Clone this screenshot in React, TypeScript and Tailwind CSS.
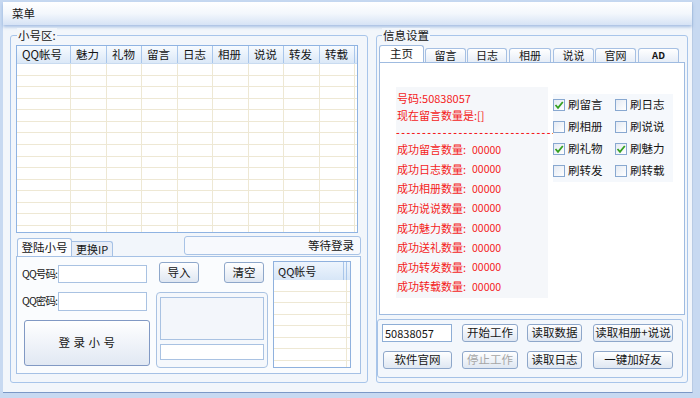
import React from "react";

const cols = [
  { l: "QQ帐号", w: "w-[54px]" },
  { l: "魅力", w: "w-[36px]" },
  { l: "礼物", w: "w-[35px]" },
  { l: "留言", w: "w-[36px]" },
  { l: "日志", w: "w-[35px]" },
  { l: "相册", w: "w-[36px]" },
  { l: "说说", w: "w-[35px]" },
  { l: "转发", w: "w-[36px]" },
  { l: "转载", w: "w-[35px]" },
];

const rowHeights = ["h-[12px]", "h-[11px]", "h-[12px]", "h-[11px]", "h-[12px]", "h-[11px]", "h-[12px]", "h-[12px]", "h-[11px]", "h-[12px]", "h-[11px]", "h-[12px]", "h-[11px]", "h-[12px]", "h-[12px]"];

function Btn({ children, className = "", disabled = false }: { children: React.ReactNode; className?: string; disabled?: boolean }) {
  return (
    <div
      className={`flex shrink-0 items-center justify-center rounded-[3px] border border-[#8ea7ca] bg-linear-to-b from-white to-[#dfe7f2] text-[11.5px] leading-none whitespace-nowrap ${disabled ? "text-[#a6a6a6]" : "text-[#151515]"} ${className}`}
    >
      {children}
    </div>
  );
}

function Check({ label, checked }: { label: string; checked?: boolean }) {
  return (
    <div className="flex items-center">
      <div className="w-[12px] h-[12px] border border-[#88a8d0] bg-linear-to-br from-[#e4eaf3] to-white flex items-center justify-center">
        {checked && (
          <svg width="10" height="10" viewBox="0 0 10 10">
            <polyline points="1.5,5 4,7.8 8.8,2" fill="none" stroke="#35a020" strokeWidth="1.8" />
          </svg>
        )}
      </div>
      <span className="ml-[3px] text-[11.5px] leading-none text-[#151515]">{label}</span>
    </div>
  );
}

const stats = ["成功留言数量", "成功日志数量", "成功相册数量", "成功说说数量", "成功魅力数量", "成功送礼数量", "成功转发数量", "成功转载数量"];

export default function App() {
  return (
    <div className="w-[700px] h-[398px] bg-[#c7d9f1] overflow-hidden font-['Noto_Sans_CJK_SC','Noto_Sans',sans-serif] text-[11px] text-[#151515]">
      <div className="ml-[3px] mt-[2px] w-[690px] h-[391px] bg-[#f2f6fb] border-r border-r-[#b8cbe4] border-b border-b-[#7b98c6] flex flex-col">
        {/* menu bar */}
        <div className="h-[23px] shrink-0 bg-linear-to-b from-white via-[#f3f7fc] to-[#d6e3f5] shadow-[0_2px_3px_rgba(130,165,215,0.7)] flex items-center pl-[9px] text-[11.5px] leading-none">
          菜单
        </div>

        <div className="flex mt-[10px]">
          {/* left group */}
          <div className="relative ml-[7px] w-[358px] h-[348px] border border-[#a8c5ea] rounded-[3px] pl-[5px] pt-[9px]">
            <div className="absolute -top-[8px] left-[6px] px-[1px] bg-[#f2f6fb] leading-[14px] text-[11.5px]">小号区:</div>

            {/* table */}
            <div className="w-[342px] h-[188px] border border-[#8fb3e2] bg-white flex flex-col overflow-hidden">
              <div className="h-[18px] shrink-0 flex bg-linear-to-b from-[#f7fbff] to-[#dbe8f7] border-b border-[#c9dbf0]">
                {cols.map((c) => (
                  <div key={c.l} className={`${c.w} shrink-0 h-full border-r border-[#a9c6ea] flex items-center pl-[5px] leading-none text-[11.5px]`}>
                    {c.l}
                  </div>
                ))}
                <div className="flex-1" />
              </div>
              <div className="flex-1 overflow-hidden">
                {rowHeights.map((h, i) => (
                  <div key={i} className={`${h} flex border-b border-[#eee8d4]`}>
                    {cols.map((c) => (
                      <div key={c.l} className={`${c.w} shrink-0 h-full border-r border-[#eee8d4]`} />
                    ))}
                  </div>
                ))}
              </div>
            </div>

            {/* tabs row */}
            <div className="mt-[3px] w-[345px] h-[20px] flex">
              <div className="self-end ml-[1px] w-[55px] h-[18px] border border-b-0 border-[#a5c1e5] rounded-t-[3px] bg-[#fbfcfe] flex items-center justify-center leading-none text-[11.5px]">
                登陆小号
              </div>
              <div className="self-end w-[41px] h-[15px] border border-b-0 border-l-0 border-[#a5c1e5] rounded-tr-[3px] bg-[#e8eef7] flex items-center justify-center leading-none text-[11px]">
                更换IP
              </div>
              <div className="ml-auto w-[177px] h-[19px] rounded-[3px] border border-[#a8c3e6] bg-[#f7f9fd] flex items-center justify-end pr-[6px] leading-none text-[11.5px]">
                等待登录
              </div>
            </div>

            {/* tab panel */}
            <div className="w-[345px] h-[118px] border border-[#a5c1e5] bg-[#fafcfe] flex pt-[4px]">
              {/* col A */}
              <div className="ml-[5px] w-[129px] flex flex-col">
                <div className="mt-[4px] flex items-center h-[18px]">
                  <span className="w-[36px] text-[10.5px] tracking-[-0.9px] leading-none whitespace-nowrap">QQ号码:</span>
                  <div className="w-[89px] h-[18px] border border-[#a9c2e2] bg-white" />
                </div>
                <div className="mt-[9px] flex items-center h-[19px]">
                  <span className="w-[36px] text-[10.5px] tracking-[-0.9px] leading-none whitespace-nowrap">QQ密码:</span>
                  <div className="w-[89px] h-[19px] border border-[#a9c2e2] bg-white" />
                </div>
                <div className="mt-[9px] ml-[2px] w-[126px] h-[46px] rounded-[3px] border border-[#8199c4] bg-linear-to-b from-white to-[#e1e8f3] flex items-center justify-center text-[11.5px] tracking-[0.5px] leading-none">
                  登 录 小 号
                </div>
              </div>

              {/* col B */}
              <div className="ml-[5px] w-[112px] flex flex-col">
                <div className="mt-[1px] flex">
                  <Btn className="ml-[3px] w-[40px] h-[21px]">导入</Btn>
                  <Btn className="ml-[25px] w-[40px] h-[21px]">清空</Btn>
                </div>
                <div className="mt-[9px] w-[112px] h-[76px] rounded-[4px] border border-[#a9c2e2] bg-[#f5f8fc] flex flex-col">
                  <div className="mt-[4px] ml-[3px] w-[104px] h-[43px] border border-[#a9c2e2] bg-[#f3f6fb]" />
                  <div className="mt-[4px] ml-[3px] w-[104px] h-[16px] border border-[#a9c2e2] bg-white" />
                </div>
              </div>

              {/* col C */}
              <div className="ml-[5px] w-[78px] h-[107px] border border-[#8fb1de] bg-white flex flex-col overflow-hidden">
                <div className="h-[18px] shrink-0 flex bg-linear-to-b from-[#eef5fd] to-[#d7e6f7]">
                  <div className="w-[70px] h-full border-r border-[#a9c6ea] flex items-center pl-[4px] text-[11px] leading-none">QQ帐号</div>
                  <div className="w-[3px] h-full border-r border-[#a9c6ea]" />
                </div>
                {rowHeights.slice(0, 8).map((h, i) => (
                  <div key={i} className={`${h} shrink-0 flex border-b border-[#eee8d4]`}>
                    <div className="w-[73px] h-full border-r border-[#eee8d4]" />
                  </div>
                ))}
              </div>
            </div>
          </div>

          {/* right group */}
          <div className="relative ml-[8px] w-[312px] h-[348px] border border-[#a8c5ea] rounded-[3px] pt-[9px]">
            <div className="absolute -top-[8px] left-[5px] px-[1px] bg-[#f2f6fb] leading-[14px] text-[11.5px]">信息设置</div>

            <div className="ml-[2px]">
              <div className="h-[17px] flex items-end">
                <div className="w-[45px] h-[17px] bg-white border border-b-0 border-[#9fbbe0] rounded-t-[3px] flex items-center justify-center leading-none text-[11.5px]">主页</div>
                <div className="ml-[1px] w-[41px] h-[14px] bg-linear-to-b from-white to-[#e6edf7] border border-b-0 border-[#a6c0e3] rounded-t-[3px] flex items-center justify-center leading-none text-[11px]">留言</div>
                <div className="ml-[1px] w-[40px] h-[14px] bg-linear-to-b from-white to-[#e6edf7] border border-b-0 border-[#a6c0e3] rounded-t-[3px] flex items-center justify-center leading-none text-[11px]">日志</div>
                <div className="ml-[2px] w-[42px] h-[14px] bg-linear-to-b from-white to-[#e6edf7] border border-b-0 border-[#a6c0e3] rounded-t-[3px] flex items-center justify-center leading-none text-[11px]">相册</div>
                <div className="ml-[2px] w-[41px] h-[14px] bg-linear-to-b from-white to-[#e6edf7] border border-b-0 border-[#a6c0e3] rounded-t-[3px] flex items-center justify-center leading-none text-[11px]">说说</div>
                <div className="ml-[1px] w-[41px] h-[14px] bg-linear-to-b from-white to-[#e6edf7] border border-b-0 border-[#a6c0e3] rounded-t-[3px] flex items-center justify-center leading-none text-[11px]">官网</div>
                <div className="ml-[2px] w-[41px] h-[14px] bg-linear-to-b from-white to-[#e6edf7] border border-b-0 border-[#a6c0e3] rounded-t-[3px] flex items-center justify-center leading-none text-[9.5px] font-semibold">AD</div>
              </div>

              <div className="w-[306px] h-[253px] border border-[#9fbbe0] bg-white flex">
                <div className="ml-[16px] mt-[24px] w-[152px] h-[211px] bg-[#f5f7fa] pt-[3px] text-[#f41c1c] text-[11px] leading-none">
                  <div className="h-[17px] flex items-center pl-[1px]">号码:50838057</div>
                  <div className="h-[17px] flex items-center pl-[1px]">现在留言数量是:[]</div>
                  <div className="h-[16px] flex items-center whitespace-nowrap text-[10px] tracking-[1.5px] font-semibold">-------------------------------</div>
                  {stats.map((s) => (
                    <div key={s} className="h-[19.6px] flex items-center pl-[1px]">
                      <span className="w-[75px]">{s}:</span>
                      <span className="text-[10.5px]">00000</span>
                    </div>
                  ))}
                </div>
                <div className="ml-[5px] mt-[31px] w-[120px] h-[88px] bg-[#f5f8fc] grid grid-cols-[62px_58px] auto-rows-[22px] items-center">
                  <Check label="刷留言" checked />
                  <Check label="刷日志" />
                  <Check label="刷相册" />
                  <Check label="刷说说" />
                  <Check label="刷礼物" checked />
                  <Check label="刷魅力" checked />
                  <Check label="刷转发" />
                  <Check label="刷转载" />
                </div>
              </div>
            </div>

            {/* bottom controls */}
            <div className="mt-[4px] w-[306px] h-[59px] rounded-[3px] border border-[#a6c2e6] bg-[#f3f7fc] pt-[4px] pl-[4px] flex flex-col">
              <div className="flex">
                <div className="w-[70px] h-[18px] border border-[#8eaed6] bg-white flex items-center pl-[2px] text-[11px] leading-none">50838057</div>
                <Btn className="ml-[10px] w-[56px] h-[18px]">开始工作</Btn>
                <Btn className="ml-[9px] w-[55px] h-[18px]">读取数据</Btn>
                <Btn className="ml-[11px] w-[80px] h-[18px]">读取相册+说说</Btn>
              </div>
              <div className="flex mt-[9px]">
                <Btn className="ml-[1px] w-[69px] h-[18px]">软件官网</Btn>
                <Btn className="ml-[10px] w-[56px] h-[18px]" disabled>停止工作</Btn>
                <Btn className="ml-[9px] w-[55px] h-[18px]">读取日志</Btn>
                <Btn className="ml-[11px] w-[80px] h-[18px]">一键加好友</Btn>
              </div>
            </div>
          </div>
        </div>
      </div>
    </div>
  );
}
